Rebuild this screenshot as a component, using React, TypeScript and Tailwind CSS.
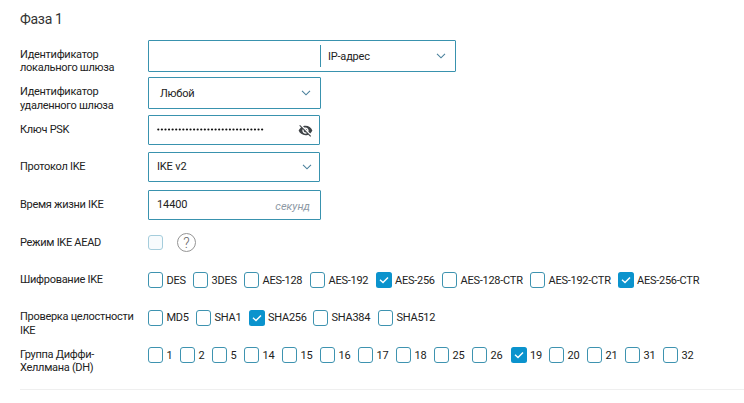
import type { ReactNode } from "react";

type Option = { label: string; width: string; checked?: boolean };

const encryption: Option[] = [
  { label: "DES", width: "w-[45px]" },
  { label: "3DES", width: "w-[51px]" },
  { label: "AES-128", width: "w-[66px]" },
  { label: "AES-192", width: "w-[66px]" },
  { label: "AES-256", width: "w-[66px]", checked: true },
  { label: "AES-128-CTR", width: "w-[88px]" },
  { label: "AES-192-CTR", width: "w-[88px]" },
  { label: "AES-256-CTR", width: "w-[88px]", checked: true },
];

const integrity: Option[] = [
  { label: "MD5", width: "w-[48px]" },
  { label: "SHA1", width: "w-[53px]" },
  { label: "SHA256", width: "w-[64px]", checked: true },
  { label: "SHA384", width: "w-[65px]" },
  { label: "SHA512", width: "w-[66px]" },
];

const groups: Option[] = [
  { label: "1", width: "w-8" },
  { label: "2", width: "w-8" },
  { label: "5", width: "w-8" },
  ...["14", "15", "16", "17", "18", "25"].map((label) => ({ label, width: "w-[38px]" })),
  { label: "26", width: "w-[39px]" },
  { label: "19", width: "w-[38px]", checked: true },
  ...["20", "21", "31", "32"].map((label) => ({ label, width: "w-[38px]" })),
];

function Row({ label, height, labelStyle, children }: { label: ReactNode; height: string; labelStyle: string; children: ReactNode }) {
  return (
    <div className={`flex items-start ${height}`}>
      <div className={`w-32 shrink-0 tracking-[-0.29px] whitespace-nowrap ${labelStyle}`}>{label}</div>
      {children}
    </div>
  );
}

function Chevron() {
  return (
    <svg className="shrink-0" width="10" height="6" viewBox="0 0 10 6" fill="none" stroke="#4a819c" strokeWidth="1.1">
      <path d="M1 0.8 5 4.8 9 0.8" />
    </svg>
  );
}

function Checkbox({ checked }: { checked?: boolean }) {
  return checked ? (
    <span className="flex h-4 w-[15.5px] shrink-0 items-center justify-center rounded-[2.5px] bg-[#0b93cd]">
      <svg width="10" height="8" viewBox="0 0 10 8" fill="none" stroke="white" strokeWidth="1.4">
        <path d="M1 3.8 4 6.6 9 1.4" />
      </svg>
    </span>
  ) : (
    <span className="h-4 w-[15px] shrink-0 rounded-[3px] border border-[#3e93b0] bg-white" />
  );
}

function Options({ items, textStyle = "pt-px" }: { items: Option[]; textStyle?: string }) {
  return (
    <div className="flex">
      {items.map((o) => (
        <label key={o.label} className={`flex h-4 shrink-0 items-center gap-[3.5px] tracking-[-0.25px] whitespace-nowrap ${o.width}`}>
          <Checkbox checked={o.checked} />
          <span className={`leading-4 ${textStyle}`}>{o.label}</span>
        </label>
      ))}
    </div>
  );
}

export default function App() {
  return (
    <main className="h-[403px] w-[744px] overflow-hidden bg-white pl-5 font-[Roboto,sans-serif] text-[11px] text-[#222]">
      <h1 className="h-10 pt-[11px] text-[14px] leading-4 tracking-[-0.3px] text-[#333]">Фаза 1</h1>

      <Row label={<>Идентификатор<br />локального шлюза</>} height="h-[37px]" labelStyle="pt-[8px] leading-[13px]">
        <div className="flex h-8 w-[308px] items-center rounded-[1px] border border-[#3992ae]">
          <div className="h-[22px] w-[172px] border-r border-[#3992ae]" />
          <div className="flex flex-1 items-center justify-between pr-[9px] pl-[7px]">
            <span className="pt-[2px] tracking-[-0.2px]">IP-адрес</span>
            <Chevron />
          </div>
        </div>
      </Row>

      <Row label={<>Идентификатор<br />удаленного шлюза</>} height="h-[38px]" labelStyle="pt-[8px] leading-[13.6px]">
        <div className="flex h-8 w-[173px] items-center justify-between rounded-[1px] border border-[#3992ae] pr-[9px] pl-[11px]">
          <span className="pt-[2px] tracking-[-0.2px]">Любой</span>
          <Chevron />
        </div>
      </Row>

      <Row label="Ключ PSK" height="h-[37px]" labelStyle="pt-[8px] leading-[13px]">
        <div className="flex h-[30px] w-[172px] items-center justify-between rounded-[1px] border border-[#3992ae] pr-[6px] pl-[8px]">
          <svg width="108" height="4" viewBox="0 0 108 4" fill="#111">
            {Array.from({ length: 30 }, (_, i) => (
              <circle key={i} cx={1.3 + i * 3.58} cy="1.5" r="1.1" />
            ))}
          </svg>
          <svg width="15" height="15" viewBox="0 0 24 24" fill="#3f4347">
            <path d="M12 7c2.76 0 5 2.24 5 5 0 .65-.13 1.26-.36 1.83l2.92 2.92c1.51-1.26 2.7-2.89 3.43-4.75-1.73-4.39-6-7.5-11-7.5-1.4 0-2.74.25-3.98.7l2.16 2.16C10.74 7.13 11.35 7 12 7zM2 4.27l2.28 2.28.46.46C3.08 8.3 1.78 10.02 1 12c1.73 4.39 6 7.5 11 7.5 1.55 0 3.03-.3 4.38-.84l.42.42L19.73 22 21 20.73 3.27 3 2 4.27zM7.53 9.8l1.55 1.55c-.05.21-.08.43-.08.65 0 1.66 1.34 3 3 3 .22 0 .44-.03.65-.08l1.55 1.55c-.67.33-1.41.53-2.2.53-2.76 0-5-2.24-5-5 0-.79.2-1.53.53-2.2zm4.31-.78l3.15 3.15.02-.16c0-1.66-1.34-3-3-3l-.17.01z" />
          </svg>
        </div>
      </Row>

      <Row label="Протокол IKE" height="h-[38px]" labelStyle="pt-[8px] leading-[13px]">
        <div className="flex h-[30px] w-[172px] items-center justify-between rounded-[1px] border border-[#3992ae] pr-[7px] pl-[8px]">
          <span className="tracking-[-0.15px]">IKE v2</span>
          <Chevron />
        </div>
      </Row>

      <Row label="Время жизни IKE" height="h-[45px]" labelStyle="pt-[8px] leading-[13px]">
        <div className="flex h-[30px] w-[173px] items-center justify-between rounded-[1px] border border-[#3992ae] pr-[10px] pl-[8px]">
          <span className="tracking-[-0.1px]">14400</span>
          <span className="pt-[4px] text-[#8e99a5] italic">секунд</span>
        </div>
      </Row>

      <Row label="Режим IKE AEAD" height="h-[37px]" labelStyle="pt-[1px] leading-[13px]">
        <span className="h-[15px] w-[15px] rounded-[3px] border border-[#a5cddc] bg-[#f7fbfd]" />
        <span className="-mt-[2px] ml-[14px] flex h-[19px] w-[19px] items-center justify-center rounded-full border border-[#959595] text-[14px] leading-none font-light text-[#666]">
          ?
        </span>
      </Row>

      <Row label="Шифрование IKE" height="h-[38px]" labelStyle="pt-[1px] leading-[13px]">
        <Options items={encryption} />
      </Row>

      <Row label={<>Проверка целостности<br />IKE</>} height="h-[37px]" labelStyle="leading-[13.6px]">
        <Options items={integrity} textStyle="pt-0" />
      </Row>

      <Row label={<>Группа Диффи-<br />Хеллмана (DH)</>} height="h-[42px]" labelStyle="pt-[1px] leading-[13px]">
        <Options items={groups} textStyle="pt-[2px]" />
      </Row>

      <hr className="border-[#efefef]" />
    </main>
  );
}
